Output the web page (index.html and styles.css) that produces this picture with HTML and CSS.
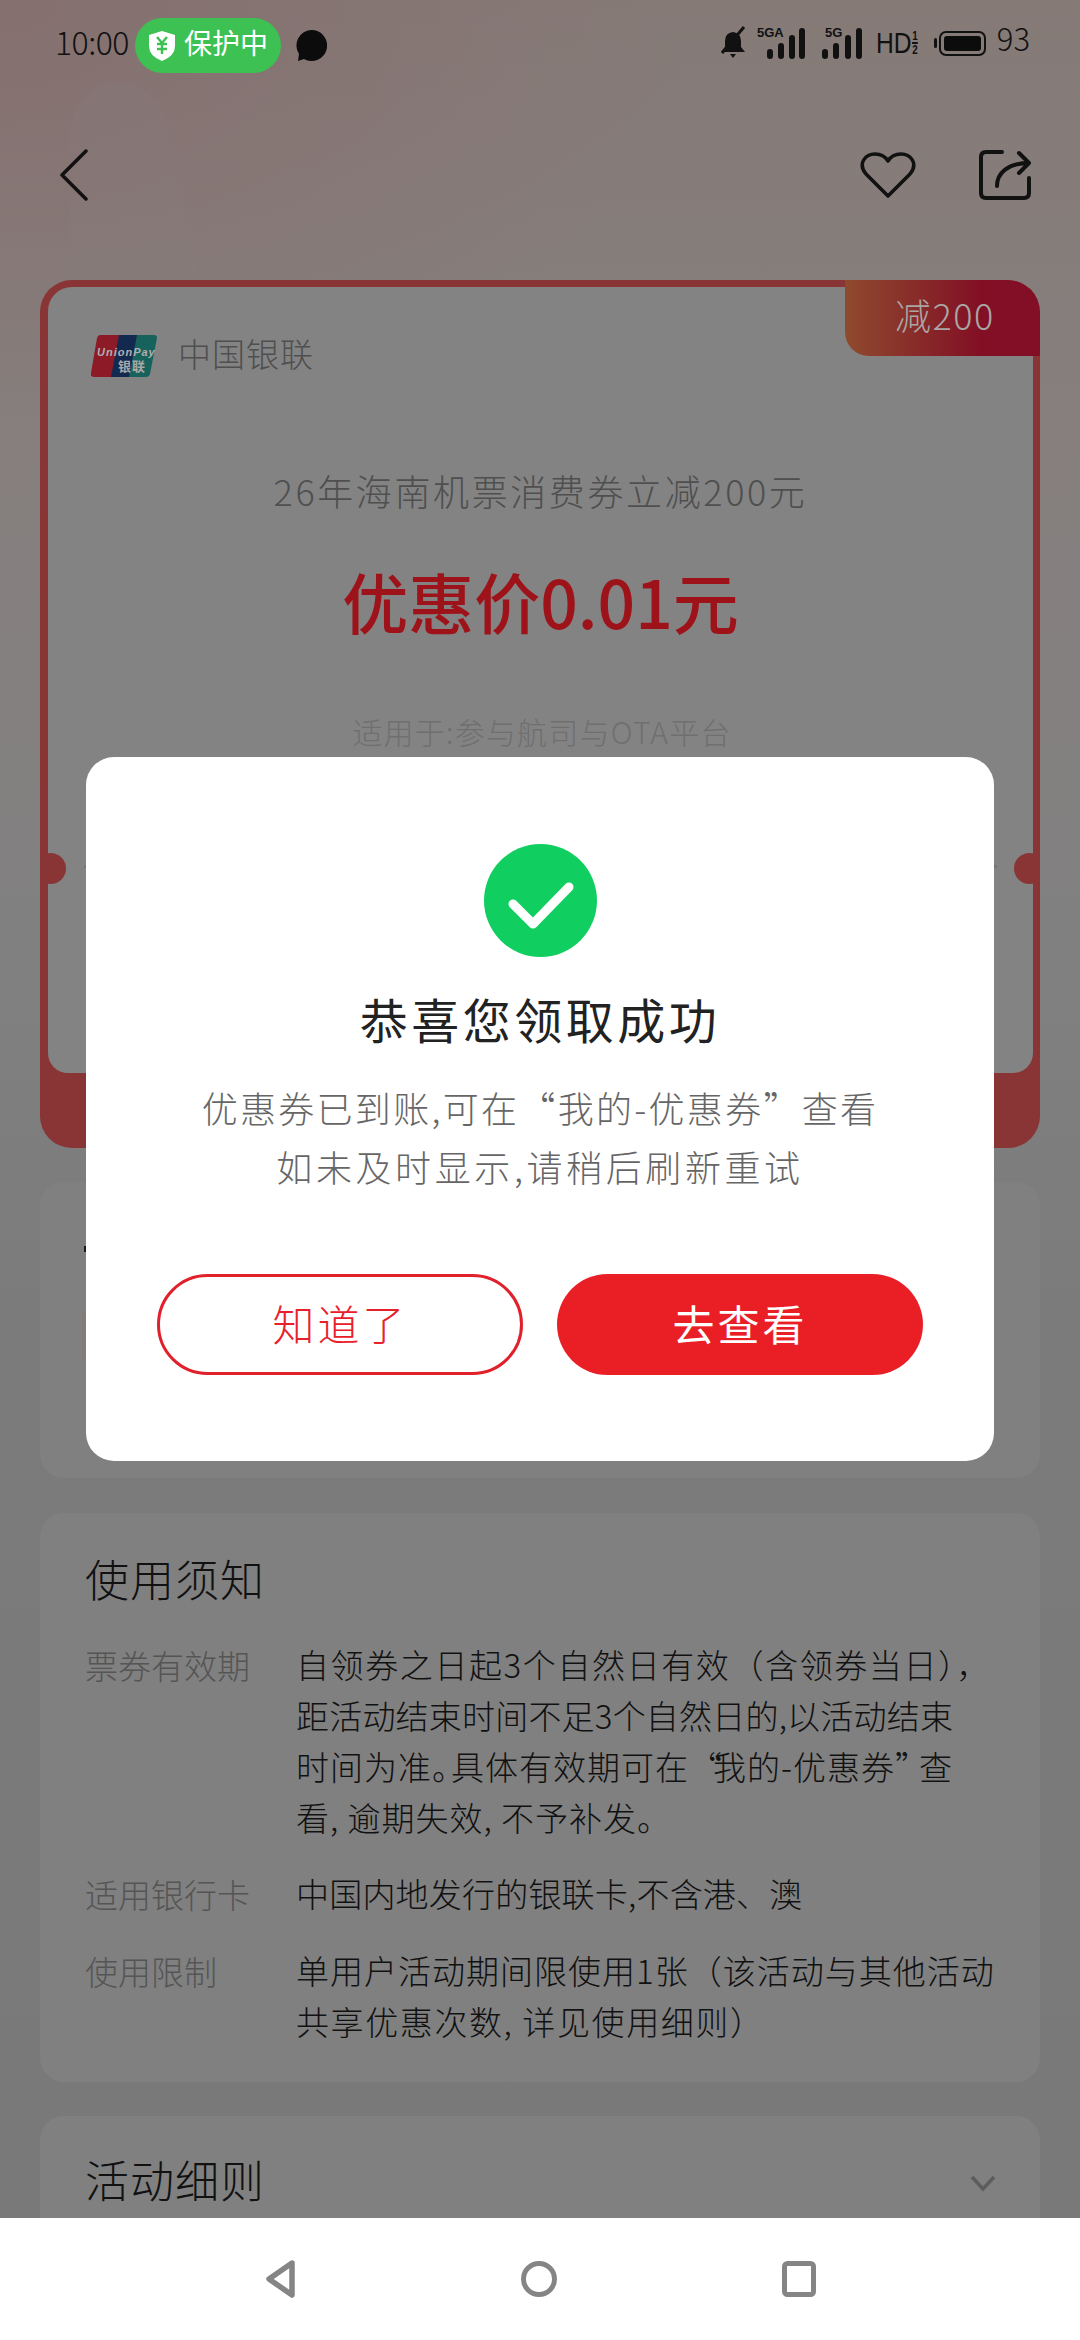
FILE: index.html
```html
<!DOCTYPE html>
<html lang="zh-CN">
<head>
  <meta charset="UTF-8">
  <meta name="viewport" content="width=device-width, initial-scale=1.0">
  <title>优惠券领取成功</title>
  <link rel="stylesheet" href="styles.css">
</head>
<body>

  <div class="page">
    <!-- 背景花纹 -->
    <svg class="bg-pattern" width="1080" height="700" viewBox="0 0 1080 700">
      <path d="M70 420 L70 130 Q80 82 120 82 Q170 82 185 200 Q190 300 260 350 Q340 430 330 560 L320 700 L70 700Z" fill="#8a8080" opacity=".12"/>
      <path d="M720 340 Q780 290 880 330 L1040 420 L1040 700 L720 700Z" fill="#8a8280" opacity=".12"/>
    </svg>

    <!-- 状态栏 -->
    <div class="status-bar">
      <div class="status-left">
        <span class="status-time">10:00</span>
        <div class="protect-pill">
          <svg width="28" height="32" viewBox="0 0 28 32">
            <path d="M14 1 L27 5 V16 Q27 26 14 31 Q1 26 1 16 V5Z" fill="#fff"/>
            <path d="M9 7 L14 13 L19 7 M14 13 V24 M9 14 H19 M9 19 H19" stroke="#3cc152" stroke-width="2.4" fill="none"/>
          </svg>
          <span class="protect-text">保护中</span>
        </div>
        <svg class="msg-dot" width="32" height="34" viewBox="0 0 32 34">
          <path d="M16 1 A15.500 15.500 0 1 1 9 30 L3 32 L4 25 A15.500 15.500 0 0 1 16 1Z" fill="#0c0c0c"/>
        </svg>
      </div>
      <div class="status-right">
        <svg width="26" height="34" viewBox="0 0 26 34">
          <path d="M13 6 Q5 7 5 15 V21 L1 26 H25 L21 21 V15 Q21 7 13 6Z M10 28 H16 L13 32Z" fill="#111"/>
          <path d="M2 27 L24 1" stroke="#111" stroke-width="3"/>
        </svg>
        <svg class="signal" width="48" height="34" viewBox="0 0 48 34">
          <text x="0" y="11" class="signal-label">5GA</text>
          <rect x="10" y="23" width="6" height="10" rx="3" fill="#111"/>
          <rect x="21" y="17" width="6" height="16" rx="3" fill="#111"/>
          <rect x="32" y="9" width="6" height="24" rx="3" fill="#111"/>
          <rect x="42" y="2" width="6" height="31" rx="3" fill="#111"/>
        </svg>
        <svg class="signal" width="40" height="34" viewBox="0 0 40 34">
          <text x="3" y="11" class="signal-label">5G</text>
          <rect x="0" y="23" width="6" height="10" rx="3" fill="#111"/>
          <rect x="11" y="17" width="6" height="16" rx="3" fill="#111"/>
          <rect x="23" y="9" width="6" height="24" rx="3" fill="#111"/>
          <rect x="34" y="2" width="6" height="31" rx="3" fill="#111"/>
        </svg>
        <div class="hd-mark">HD<span class="hd-sims"><span>1</span><span>2</span></span></div>
        <div class="battery"><i class="battery-nub"></i><i class="battery-body"><i class="battery-fill"></i></i></div>
        <span class="status-num">93</span>
      </div>
    </div>

    <!-- 顶部操作 -->
    <div class="toolbar">
      <svg width="30" height="52" viewBox="0 0 30 52">
        <path d="M27 2 L3 26 L27 50" stroke="#111" stroke-width="3.500" fill="none" stroke-linecap="round" stroke-linejoin="round"/>
      </svg>
      <div class="toolbar-right">
        <svg width="56" height="46" viewBox="0 0 56 46">
          <path d="M28 44 L6 22 C-3 11 6 2 15 2 C21 2 25 4 28 9 C31 4 35 2 41 2 C50 2 59 11 50 22Z" stroke="#111" stroke-width="3.500" fill="none" stroke-linejoin="round"/>
        </svg>
        <svg width="54" height="52" viewBox="0 0 54 52">
          <path d="M24 3 H8 Q3 3 3 8 V44 Q3 49 8 49 H46 Q51 49 51 44 V29" stroke="#111" stroke-width="4" fill="none" stroke-linecap="round"/>
          <path d="M19 37 C19 24 30 14 51 14 M41 4 L51 14 L41 24" stroke="#111" stroke-width="4" fill="none" stroke-linecap="round" stroke-linejoin="round"/>
        </svg>
      </div>
    </div>

    <!-- 优惠券卡片 -->
    <div class="coupon">
      <div class="coupon-tag">减200</div>
      <i class="notch notch-left"></i>
      <i class="notch notch-right"></i>
      <div class="coupon-body">
        <div class="coupon-brand">
          <svg width="66" height="42" viewBox="0 0 66 42">
            <path d="M9 0 H30 L22 42 H3 Q-1 42 0 38 L6 3 Q7 0 9 0Z" fill="#8c1b27"/>
            <path d="M28 0 H48 L40 42 H20Z" fill="#14294f"/>
            <path d="M46 0 H63 Q66 0 66 3 L59 39 Q58 42 55 42 H38Z" fill="#17625c"/>
            <text x="6" y="21" class="logo-en">UnionPay</text>
            <text x="27" y="36" class="logo-cn">银联</text>
          </svg>
          <span class="brand-name">中国银联</span>
        </div>
        <div class="coupon-title">26年海南机票消费券立减200元</div>
        <div class="coupon-price">优惠价0.01元</div>
        <div class="coupon-usage">适用于:参与航司与OTA平台</div>
        <div class="coupon-divider"></div>
      </div>
    </div>

    <!-- 弹窗盖住的详情 -->
    <div class="panel panel-detail">
      <div class="detail-title"></div>
      <div class="detail-thumb"></div>
    </div>

    <!-- 使用须知 -->
    <div class="panel panel-notice">
      <h2 class="panel-title">使用须知</h2>
      <div class="notice-rows">
        <div class="notice-row">
          <div class="notice-label">票券有效期</div>
          <div class="notice-text">
            <div class="line-wide">自领券之日起3个自然日有效（含领券当日），</div>
            <div class="line-narrow">距活动结束时间不足3个自然日的,以活动结束</div>
            <div>时间为准<span class="tight">。</span>具体有效期可在<span class="tight-quote">“</span>我的-优惠券<span class="tight-quote">”</span>查</div>
            <div>看, 逾期失效, 不予补发。</div>
          </div>
        </div>
        <div class="notice-row">
          <div class="notice-label">适用银行卡</div>
          <div class="notice-text">
            <div class="line-narrow">中国内地发行的银联卡,不含港、澳</div>
          </div>
        </div>
        <div class="notice-row">
          <div class="notice-label">使用限制</div>
          <div class="notice-text">
            <div>单用户活动期间限使用1张（该活动与其他活动</div>
            <div class="line-wide">共享优惠次数, 详见使用细则）</div>
          </div>
        </div>
      </div>
    </div>

    <!-- 活动细则 -->
    <div class="panel panel-rules">
      <h2 class="panel-title">活动细则</h2>
      <svg width="26" height="17" viewBox="0 0 26 17">
        <path d="M2 2 L13 14 L24 2" stroke="#5c5c5c" stroke-width="3.500" fill="none"/>
      </svg>
    </div>

    <!-- 领取成功弹窗 -->
    <div class="modal">
      <svg class="modal-check" width="113" height="113" viewBox="0 0 113 113">
        <circle cx="56.500" cy="56.500" r="56.500" fill="#10cf60"/>
        <path d="M29 60 L49 80 L85 43" stroke="#fff" stroke-width="9" fill="none" stroke-linecap="round" stroke-linejoin="round"/>
      </svg>
      <h1 class="modal-title">恭喜您领取成功</h1>
      <p class="modal-text">优惠券已到账,可在“我的-优惠券”查看</p>
      <p class="modal-text modal-text-wide">如未及时显示,请稍后刷新重试</p>
      <div class="modal-actions">
        <div class="btn btn-outline">知道了</div>
        <div class="btn btn-solid">去查看</div>
      </div>
    </div>
  </div>

  <!-- 底部导航 -->
  <div class="nav-bar">
    <svg width="31" height="38" viewBox="0 0 31 38">
      <path d="M27 3 L4 19 L27 35Z" stroke="#858585" stroke-width="5.500" fill="none" stroke-linejoin="round"/>
    </svg>
    <svg width="36" height="38" viewBox="0 0 36 38">
      <circle cx="18" cy="19" r="15.500" stroke="#858585" stroke-width="5" fill="none"/>
    </svg>
    <svg width="34" height="36" viewBox="0 0 34 36">
      <rect x="2.500" y="2.500" width="29" height="31" rx="3" stroke="#858585" stroke-width="5" fill="none"/>
    </svg>
  </div>

</body>
</html>
```

FILE: styles.css
```css
* { margin:0; padding:0; box-sizing:border-box; }
body { width:1080px; height:2340px; overflow:hidden; display:flex; flex-direction:column; background:#fff; font-family:"Noto Sans CJK SC", "Noto Sans", sans-serif; font-weight:300; color:#111; }

.page { position:relative; flex:1; min-height:0; overflow:hidden; background:radial-gradient(700px 420px at 0 0, #85706f 0%, rgba(133,112,111,0) 100%), linear-gradient(180deg, #857a76 0, #867e7c 300px, #848080 700px, #808080 1000px, #7b7b7b 1300px, #797979 100%); }
.bg-pattern { position:absolute; top:0; left:0; }

/* 状态栏 */
.status-bar { position:relative; height:84px; padding:18px 50px 0 55px; display:flex; justify-content:space-between; align-items:flex-start; }
.status-left { display:flex; align-items:center; height:55px; }
.status-time { width:80px; margin-top:-9px; font-size:32px; letter-spacing:-.5px; color:#111; }
.protect-pill { width:146px; height:55px; border-radius:28px; background:#3cc152; display:flex; align-items:center; justify-content:center; gap:8px; color:#fff; font-size:28px; font-weight:400; }
.protect-text { margin-top:-7px; }
.msg-dot { margin-left:14px; }
.status-right { display:flex; align-items:center; height:50px; gap:14px; }
.status-right .signal:nth-of-type(2) { margin-left:-3px; }
.status-right .signal:nth-of-type(3) { margin-left:3px; }
.signal-label { font:700 13px "Liberation Sans", sans-serif; fill:#111; }
.hd-mark { display:flex; align-items:center; font:400 30px/1 "Liberation Sans", sans-serif; color:#111; transform:scaleX(.82); transform-origin:left center; margin-right:-14px; }
.hd-sims { display:flex; flex-direction:column; font-size:12px; font-weight:700; margin-left:1px; }
.hd-sims span + span { border-top:2px solid #111; }
.battery { display:flex; align-items:center; gap:2px; margin-left:7px; }
.battery-nub { width:3px; height:10px; background:#111; border-radius:2px; }
.battery-body { width:47px; height:25px; padding:3px; border:2px solid #111; border-radius:7px; display:flex; }
.battery-fill { flex:1; background:#0c0c0c; border-radius:3px; }
.status-num { font-size:31px; line-height:31px; color:#111; margin-top:-12px; margin-left:-3px; }

/* 顶部操作 */
.toolbar { position:relative; height:196px; padding:65px 48px 0 59px; display:flex; justify-content:space-between; align-items:flex-start; }
.toolbar-right { display:flex; align-items:center; gap:62px; }

/* 优惠券 */
.coupon { position:relative; margin:0 40px; height:868px; padding:7px 7px 75px 8px; background:#8a3535; border-radius:32px; overflow:hidden; }
.coupon-body { height:100%; display:flex; flex-direction:column; align-items:center; background:#838383; border-radius:24px 24px 20px 20px; overflow:hidden; }
.coupon-tag { position:absolute; top:0; right:0; z-index:1; width:195px; height:76px; padding:0 0 8px 50px; display:flex; align-items:center; background:linear-gradient(90deg, #8f4a2e, #820f25 70%); border-radius:0 32px 0 24px; color:#aaa6a6; font-size:36px; letter-spacing:1.500px; }
.notch { position:absolute; top:573px; width:31px; height:31px; border-radius:50%; background:#8a3535; }
.notch-left { left:-5px; }
.notch-right { right:-5px; }
.coupon-brand { align-self:flex-start; margin:48px 0 0 43px; height:42px; display:flex; align-items:center; gap:21px; font-size:33px; letter-spacing:1px; color:#4f4f4f; }
.brand-name { margin-top:-6px; }
.logo-en { font:italic 700 11px "Liberation Sans", sans-serif; fill:#b0b0b0; }
.logo-cn { font-size:13px; font-weight:700; fill:#a8a8a8; }
.coupon-title { margin-top:88px; font-size:36px; line-height:50px; letter-spacing:2.600px; color:#4f4f4f; white-space:nowrap; }
.coupon-price { margin-top:43px; font-size:66px; line-height:84px; font-weight:500; color:#9e1219; white-space:nowrap; }
.coupon-usage { margin-top:69px; margin-left:3px; font-size:30px; line-height:40px; letter-spacing:1.200px; color:#6f6f6f; white-space:nowrap; }
.coupon-divider { align-self:stretch; margin:114px 36px 0; border-top:3px dashed #777; }

/* 内容面板 */
.panel { margin:34px 40px 0; border-radius:24px; background:#808080; }
.panel-detail { height:296px; padding:64px 0 0 44px; margin-top:34px; }
.detail-title { width:120px; height:6px; background:#1d1d1d; }
.detail-thumb { width:200px; height:48px; margin-top:60px; margin-left:-2px; background:#857a7a; }
.panel-notice { height:569px; padding:35px 40px 0 45px; margin-top:35px; }
.panel-title { font-size:44px; line-height:60px; font-weight:300; letter-spacing:1px; color:#111; }
.notice-rows { margin-top:32px; display:flex; flex-direction:column; gap:26px; }
.notice-row { display:flex; font-size:33px; line-height:51px; white-space:nowrap; }
.notice-label { width:211px; flex:none; color:#555; }
.notice-text { color:#111; letter-spacing:1px; margin-top:-1px; }
.line-wide { letter-spacing:1.600px; }
.line-narrow { letter-spacing:.2px; }
.tight { letter-spacing:-14px; }
.tight-quote { letter-spacing:-9px; }
.panel-rules { height:200px; margin-top:34px; padding:33px 44px 0 45px; display:flex; justify-content:space-between; align-items:flex-start; }
.panel-rules svg { margin-top:26px; }

/* 弹窗 */
.modal { position:absolute; left:86px; top:757px; width:908px; height:704px; padding-top:87px; display:flex; flex-direction:column; align-items:center; background:#fff; border-radius:28px; }
.modal-title { margin-top:31px; font-size:48px; line-height:60px; font-weight:400; letter-spacing:3.500px; color:#222; white-space:nowrap; }
.modal-text { font-size:36px; line-height:59px; letter-spacing:2.300px; color:#666; text-align:center; white-space:nowrap; }
.modal-title + .modal-text { margin-top:30px; }
.modal-text-wide { letter-spacing:3.600px; }
.modal-actions { margin-top:78px; display:flex; gap:34px; }
.btn { width:366px; height:101px; padding-bottom:4px; border-radius:51px; display:flex; align-items:center; justify-content:center; font-size:42px; letter-spacing:3px; }
.btn-outline { border:3px solid #e0202a; color:#e8202a; }
.btn-solid { background:#ea1f26; color:#fff; font-weight:400; }

/* 底部导航 */
.nav-bar { flex:none; height:122px; background:#fff; display:flex; align-items:center; justify-content:center; gap:225px; }
```
